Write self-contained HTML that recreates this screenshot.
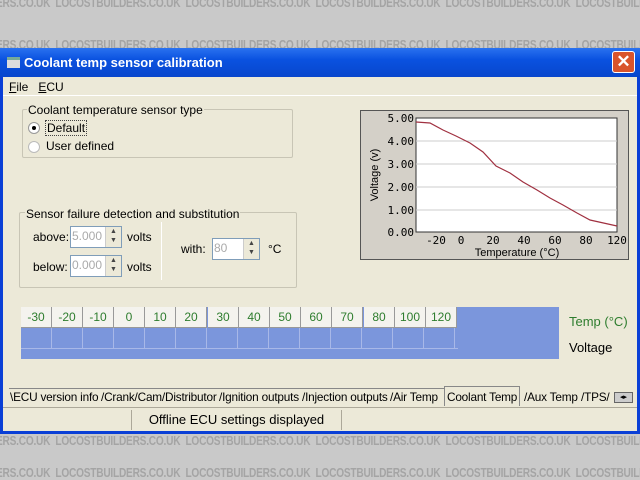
<!DOCTYPE html>
<html><head><style>
*{margin:0;padding:0;box-sizing:border-box}
body{width:640px;height:480px;overflow:hidden;background:#c9c9c9;font-family:"Liberation Sans",sans-serif;font-size:12px;position:relative}
.wm{position:absolute;left:-4px;white-space:nowrap;color:#a4a4a4;font-weight:bold;font-size:13px;letter-spacing:-0.3px;transform:scaleX(0.78);transform-origin:left}
.a{position:absolute}
.win{position:absolute;left:0;top:48px;width:640px;height:386px;background:#0a3fd6;}
.title{position:absolute;left:0;top:0;width:640px;height:29px;background:linear-gradient(#2a72f0,#0a52e0 40%,#0846cc);color:#fff;font-weight:bold;font-size:13px;}
.body{position:absolute;left:3px;top:29px;width:634px;height:354px;background:#ece9d8;overflow:hidden}
.gb{position:absolute;border:1px solid #c8c5b5;border-radius:2px}
.t{position:absolute;background:#ece9d8;padding:0 1px;font-size:12px;color:#000}
.spin{position:absolute;background:#fff;border:1px solid #7f9db9;color:#aaa;font-size:12px;padding-left:1px;height:22px;line-height:19px}
.sb{position:absolute;right:0;top:0;width:16px;height:20px;background:#ece9d8;border-left:1px solid #ccc;font-size:7px;color:#444;text-align:center;line-height:9px}
.cell{position:absolute;top:0;height:21px;width:31px;background:#f4f3ee;border-right:1px solid #999;border-bottom:1px solid #999;color:#2e7d2e;text-align:center;line-height:20px;font-size:12px}
.tab{position:absolute;top:0;height:17px;font-size:11.8px;line-height:16px;white-space:nowrap;letter-spacing:-0.2px}
</style></head><body>
<div class="wm" style="top:-5px">ERS.CO.UK &nbsp;LOCOSTBUILDERS.CO.UK &nbsp;LOCOSTBUILDERS.CO.UK &nbsp;LOCOSTBUILDERS.CO.UK &nbsp;LOCOSTBUILDERS.CO.UK &nbsp;LOCOSTBUILDERS.CO.UK &nbsp;LOCOSTBUILDERS.CO.UK &nbsp;LOCOST</div>
<div class="wm" style="top:37px">ERS.CO.UK &nbsp;LOCOSTBUILDERS.CO.UK &nbsp;LOCOSTBUILDERS.CO.UK &nbsp;LOCOSTBUILDERS.CO.UK &nbsp;LOCOSTBUILDERS.CO.UK &nbsp;LOCOSTBUILDERS.CO.UK &nbsp;LOCOSTBUILDERS.CO.UK &nbsp;LOCOST</div>
<div class="wm" style="top:433px">ERS.CO.UK &nbsp;LOCOSTBUILDERS.CO.UK &nbsp;LOCOSTBUILDERS.CO.UK &nbsp;LOCOSTBUILDERS.CO.UK &nbsp;LOCOSTBUILDERS.CO.UK &nbsp;LOCOSTBUILDERS.CO.UK &nbsp;LOCOSTBUILDERS.CO.UK &nbsp;LOCOST</div>
<div class="wm" style="top:465px">ERS.CO.UK &nbsp;LOCOSTBUILDERS.CO.UK &nbsp;LOCOSTBUILDERS.CO.UK &nbsp;LOCOSTBUILDERS.CO.UK &nbsp;LOCOSTBUILDERS.CO.UK &nbsp;LOCOSTBUILDERS.CO.UK &nbsp;LOCOSTBUILDERS.CO.UK &nbsp;LOCOST</div>
<div class="win">
 <div class="title">
  <div class="a" style="left:7px;top:9px;width:13px;height:11px;background:#ddd;border-top:3px solid #7a9"></div>
  <div class="a" style="left:24px;top:7px">Coolant temp sensor calibration</div>
  <div class="a" style="left:612px;top:3px;width:23px;height:22px;background:#d9542c;border:1px solid #fff;border-radius:3px;color:#fff;text-align:center;font-size:17px;line-height:20px">✕</div>
 </div>
 <div class="body">
  <div class="a" style="left:0;top:0;width:634px;height:19px;border-bottom:1px solid #fff"></div>
  <div class="a" style="left:6px;top:3px"><u>F</u>ile &nbsp;&nbsp;<u>E</u>CU</div>
  <div class="gb" style="left:19px;top:32px;width:271px;height:49px"></div>
  <div class="t" style="left:24px;top:26px">Coolant temperature sensor type</div>
  <div class="a" style="left:25px;top:45px;width:12px;height:12px;border-radius:50%;background:#fff;border:1px solid #999"><div class="a" style="left:3px;top:3px;width:4px;height:4px;border-radius:50%;background:#000"></div></div>
  <div class="a" style="left:42px;top:43px;border:1px dotted #444;padding:0 1px">Default</div>
  <div class="a" style="left:25px;top:64px;width:12px;height:12px;border-radius:50%;background:#fff;border:1px solid #bbb"></div>
  <div class="a" style="left:43px;top:62px">User defined</div>
  <div class="gb" style="left:16px;top:135px;width:278px;height:76px"></div>
  <div class="a" style="left:158px;top:145px;width:1px;height:58px;background:#c8c5b5;border-right:1px solid #fff"></div>
  <div class="t" style="left:22px;top:130px">Sensor failure detection and substitution</div>
  <div class="a" style="left:30px;top:153px">above:</div>
  <div class="spin" style="left:67px;top:149px;width:52px">5.000<div class="sb">▲<br>▼</div></div>
  <div class="a" style="left:124px;top:153px">volts</div>
  <div class="a" style="left:30px;top:183px">below:</div>
  <div class="spin" style="left:67px;top:178px;width:52px">0.000<div class="sb">▲<br>▼</div></div>
  <div class="a" style="left:124px;top:183px">volts</div>
  <div class="a" style="left:178px;top:165px">with:</div>
  <div class="spin" style="left:209px;top:161px;width:48px">80<div class="sb">▲<br>▼</div></div>
  <div class="a" style="left:265px;top:165px">°C</div>
  <div class="a" style="left:357px;top:33px;width:269px;height:150px;background:#d4d0c8;border:1px solid #555"></div>
  <svg class="a" style="left:357px;top:33px" width="269" height="150" viewBox="357 110 269 150">
   <rect x="413" y="118" width="201" height="114" fill="#fff" stroke="#333"/>
   <g stroke="#ccc"><line x1="413" y1="141" x2="614" y2="141"/><line x1="413" y1="164" x2="614" y2="164"/><line x1="413" y1="187" x2="614" y2="187"/><line x1="413" y1="210" x2="614" y2="210"/></g>
   <polyline fill="none" stroke="#a03040" stroke-width="1.2" points="413,122 427,123 440,130 453,136 467,143 480,152 493,166 507,173 520,182 534,190 547,198 560,205 574,213 587,220 614,226"/>
   <g font-family="DejaVu Sans Mono,monospace" font-size="11" fill="#000" text-anchor="end"><text x="411" y="122">5.00</text><text x="411" y="145">4.00</text><text x="411" y="168">3.00</text><text x="411" y="191">2.00</text><text x="411" y="214">1.00</text><text x="411" y="236">0.00</text></g>
   <g font-family="DejaVu Sans Mono,monospace" font-size="11" fill="#000" text-anchor="middle"><text x="433" y="244">-20</text><text x="458" y="244">0</text><text x="490" y="244">20</text><text x="521" y="244">40</text><text x="552" y="244">60</text><text x="583" y="244">80</text><text x="614" y="244">120</text></g>
   <text x="514" y="256" font-size="11" text-anchor="middle" font-family="Liberation Sans">Temperature (°C)</text>
   <text transform="translate(375,175) rotate(-90)" font-size="11" text-anchor="middle" font-family="Liberation Sans">Voltage (v)</text>
  </svg>
  <div class="a" style="left:18px;top:230px;width:538px;height:52px;background:#7b96dc">
   <div class="a" style="left:0;top:21px;width:437px;height:21px;border-bottom:1px solid #a8b8e8;background:repeating-linear-gradient(90deg,#7b96dc 0 30px,#a8b8e8 30px 31px)"></div>
  </div>
  <div class="a" style="left:18px;top:230px">
   <div class="cell" style="left:0">-30</div><div class="cell" style="left:31px">-20</div><div class="cell" style="left:62px">-10</div><div class="cell" style="left:93px">0</div><div class="cell" style="left:124px">10</div><div class="cell" style="left:155px">20</div><div class="cell" style="left:187px">30</div><div class="cell" style="left:218px">40</div><div class="cell" style="left:249px">50</div><div class="cell" style="left:280px">60</div><div class="cell" style="left:311px">70</div><div class="cell" style="left:343px">80</div><div class="cell" style="left:374px">100</div><div class="cell" style="left:405px">120</div>
  </div>
  <div class="a" style="left:566px;top:237px;color:#2e7d2e;font-size:13px">Temp (°C)</div>
  <div class="a" style="left:566px;top:263px;font-size:13px">Voltage</div>
  <div class="a" style="left:6px;top:311px;width:443px;height:1px;background:#888"></div>
  <div class="a" style="left:0;top:312px;width:634px;height:18px">
   <div class="tab" style="left:7px">\ECU version info</div>
   <div class="tab" style="left:98px">/Crank/Cam/Distributor</div>
   <div class="tab" style="left:216px">/Ignition outputs</div>
   <div class="tab" style="left:299px">/Injection outputs</div>
   <div class="tab" style="left:387px">/Air Temp</div>
   <div class="tab" style="left:441px;top:-3px;height:20px;border:1px solid #888;border-bottom:none;padding:2px 2px 0;background:#ece9d8">Coolant Temp</div>
   <div class="tab" style="left:521px">/Aux Temp</div>
   <div class="tab" style="left:578px">/TPS/</div>
   <div class="a" style="left:611px;top:3px;width:19px;height:11px;background:#ccc;border:1px solid #666;font-size:7px;line-height:9px;text-align:center">◂▸</div>
  </div>
  <div class="a" style="left:0;top:330px;width:634px;height:1px;background:#aca899"></div>
  <div class="a" style="left:128px;top:333px;width:211px;height:20px;border-left:1px solid #aca899;border-right:1px solid #aca899;text-align:center;line-height:19px;font-size:13px">Offline ECU settings displayed</div>
 </div>
</div>
</body></html>
